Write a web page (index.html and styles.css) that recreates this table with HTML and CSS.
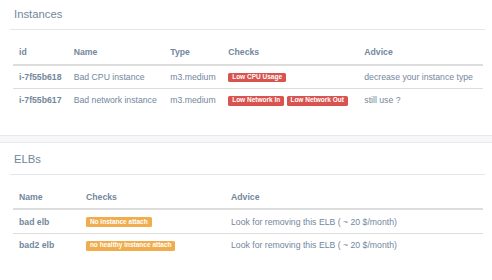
FILE: index.html
```html
<!DOCTYPE html>
<html>
<head>
<meta charset="utf-8">
<link rel="stylesheet" href="styles.css">
</head>
<body>
<div class="panel panel-first">
  <div class="title">Instances</div>
  <table class="tbl">
    <thead>
      <tr>
        <th class="i-id">id</th>
        <th class="i-name">Name</th>
        <th class="i-type">Type</th>
        <th class="i-checks">Checks</th>
        <th>Advice</th>
      </tr>
    </thead>
    <tbody>
      <tr>
        <td class="strong">i-7f55b618</td>
        <td>Bad CPU instance</td>
        <td>m3.medium</td>
        <td><span class="label red">Low CPU Usage</span></td>
        <td>decrease your instance type</td>
      </tr>
      <tr>
        <td class="strong">i-7f55b617</td>
        <td>Bad network instance</td>
        <td>m3.medium</td>
        <td><span class="label red">Low Network In</span> <span class="label red">Low Network Out</span></td>
        <td>still use ?</td>
      </tr>
    </tbody>
  </table>
</div>
<div class="panel">
  <div class="title">ELBs</div>
  <table class="tbl">
    <thead>
      <tr>
        <th class="e-name">Name</th>
        <th class="e-checks">Checks</th>
        <th>Advice</th>
      </tr>
    </thead>
    <tbody>
      <tr>
        <td class="strong">bad elb</td>
        <td><span class="label orange">No instance attach</span></td>
        <td>Look for removing this ELB ( ~ 20 $/month)</td>
      </tr>
      <tr>
        <td class="strong">bad2 elb</td>
        <td><span class="label orange">no healthy instance attach</span></td>
        <td>Look for removing this ELB ( ~ 20 $/month)</td>
      </tr>
    </tbody>
  </table>
</div>
</body>
</html>
```

FILE: styles.css
```css
html, body {
  margin: 0;
  padding: 0;
}
body {
  background: #F7F7F7;
  font-family: "Liberation Sans", Arial, sans-serif;
  color: #73879C;
}
.panel {
  background: #fff;
  border-top: 1px solid #E6E9ED;
  border-bottom: 1px solid #E6E9ED;
  padding: 10px 7px 23px 10px;
  margin-bottom: 6px;
}
.panel-first {
  margin-top: -3px;
}
.title {
  font-size: 11.3px;
  line-height: 13px;
  padding: 0 0 8px 4px;
  border-bottom: 1px solid #E3E6EA;
}
.tbl {
  width: 470px;
  margin: 11px 0 0 3px;
  border-collapse: collapse;
  table-layout: fixed;
  font-size: 8.7px;
  line-height: 12px;
}
.tbl th, .tbl td {
  padding: 5.3px 6px;
  text-align: left;
  white-space: nowrap;
  vertical-align: top;
}
.tbl th {
  font-weight: bold;
  border-bottom: 2px solid #DDDDDD;
}
.tbl tbody tr + tr td {
  border-top: 1px solid #DDDDDD;
}
.strong {
  font-weight: bold;
}
.i-id { width: 42.7px; }
.i-name { width: 84.6px; }
.i-type { width: 46px; }
.i-checks { width: 124px; }
.e-name { width: 55px; }
.e-checks { width: 133px; }
.label {
  display: inline-block;
  font-size: 6.5px;
  font-weight: bold;
  line-height: 1;
  color: #fff;
  padding: 1.3px 3.9px 1.9px;
  border-radius: 1.6px;
  vertical-align: 1px;
}
.red { background: #D9534F; }
.orange { background: #F0AD4E; }
```
